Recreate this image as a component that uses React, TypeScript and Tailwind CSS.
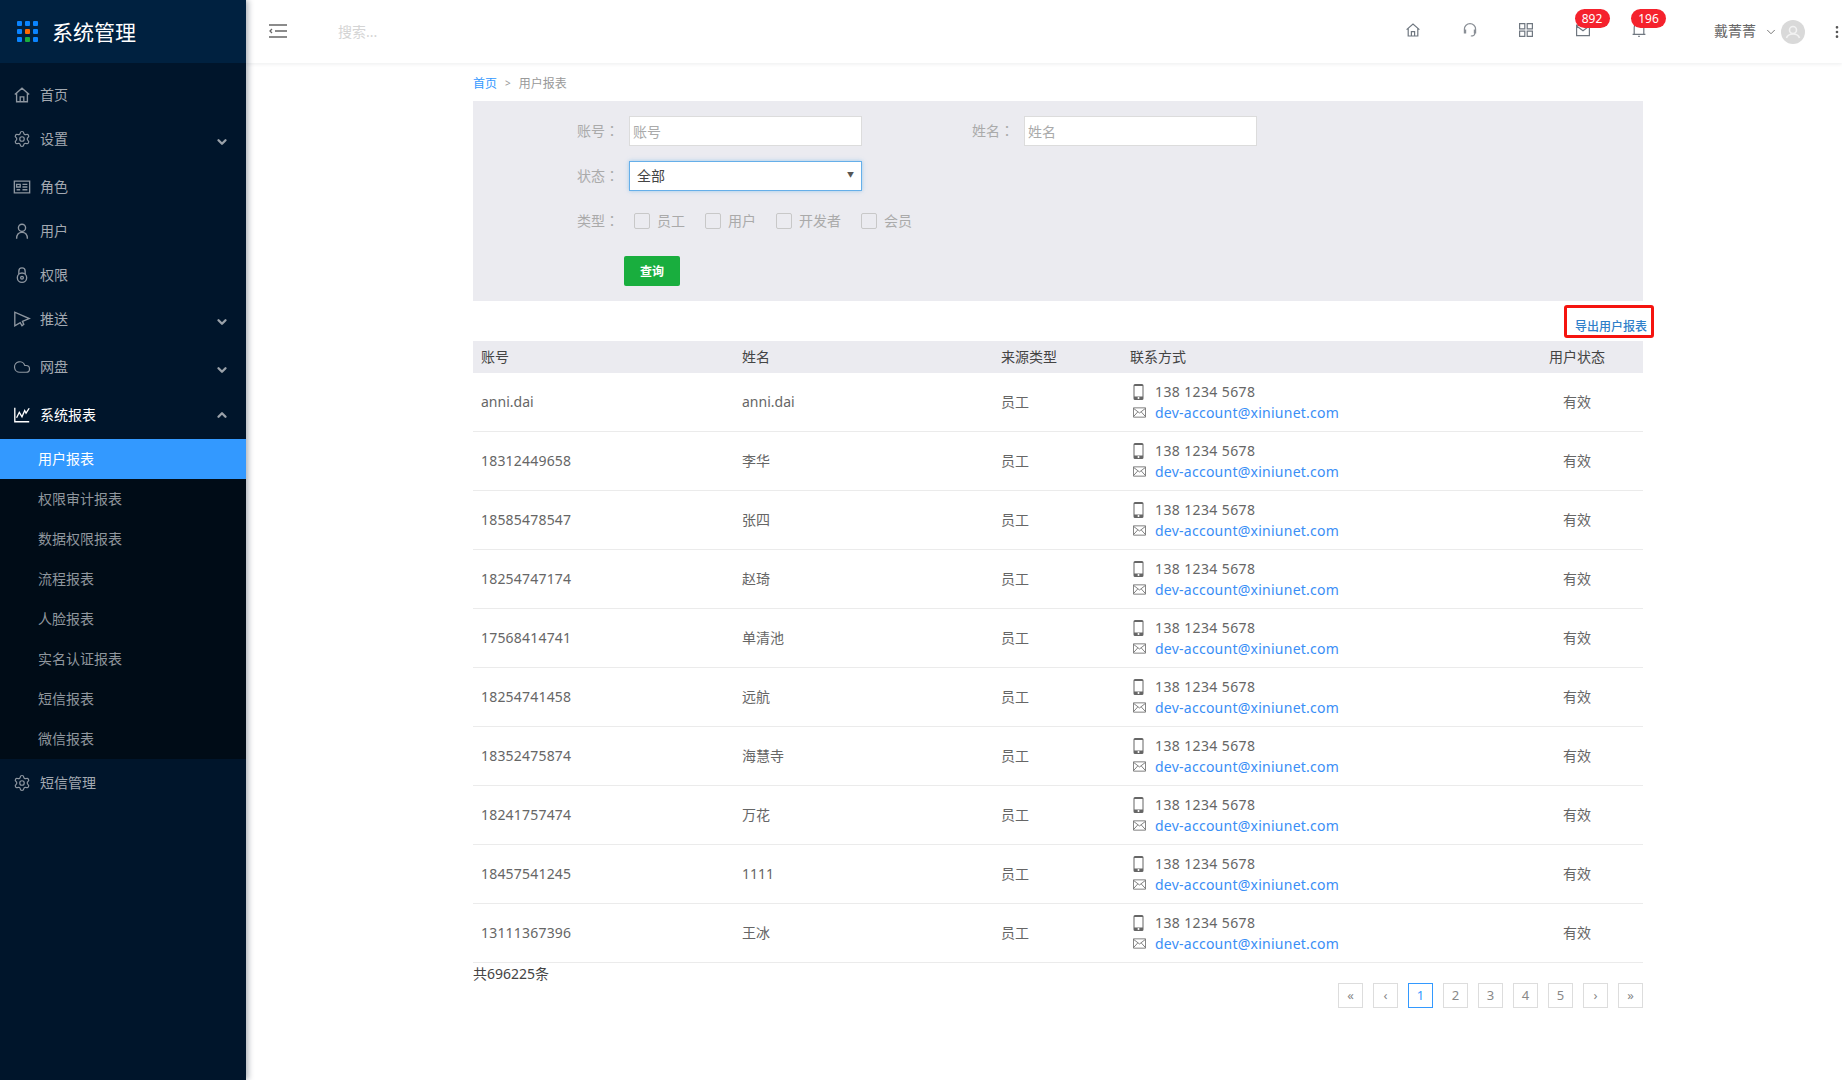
import { ChevronDown, ChevronUp, Settings, Cloud, MoreVertical } from "lucide-react";
import type { ReactNode } from "react";

const iconCls = "w-[18px] h-[18px] text-[#8d96a0]";

function Svg({ children, className = iconCls }: { children: ReactNode; className?: string }) {
  return (
    <svg viewBox="0 0 20 20" fill="none" stroke="currentColor" strokeWidth="1.5" className={className}>
      {children}
    </svg>
  );
}

const HomeIcon = ({ className }: { className?: string }) => (
  <Svg className={className}>
    <path d="M2 9.500 10 2.500l8 7M4 8v9.500h12V8M8 17.500v-5.500h4v5.500" />
  </Svg>
);
const RoleIcon = () => (
  <Svg>
    <path d="M1.500 3.500h17v13h-17zM4 7h4v3H4zM4 13h4M10.500 7h5.500M10.500 10h5.500M10.500 13h5.500" />
  </Svg>
);
const UserIcon = () => (
  <Svg>
    <circle cx="10" cy="6.500" r="4" />
    <path d="M4 18.500c0-4 2-7 6-7s6 3 6 7" />
  </Svg>
);
const LockIcon = () => (
  <Svg>
    <path d="M6.500 9V5.500a3.500 3.500 0 0 1 7 0V9" />
    <circle cx="10" cy="13" r="5.200" />
    <circle cx="10" cy="13" r="1.500" />
  </Svg>
);
const PushIcon = () => (
  <Svg>
    <path d="M2 2.500v15l6-3.500 2 3.500 2-1.500-1.500-3.500 7.500-3z" />
  </Svg>
);
const ChartIcon = () => (
  <svg viewBox="0 0 20 20" fill="none" stroke="white" strokeWidth="1.5" className="w-[18px] h-[18px]">
    <path d="M2 2v15.500h16M4 13l3-6 3 5 3-7 1.500 3L18 2.500" />
  </svg>
);

type MenuItem = { label: string; icon: ReactNode; h: string; arrow?: boolean };

const topMenu: MenuItem[] = [
  { label: "首页", icon: <HomeIcon className={iconCls} />, h: "h-[44px]" },
  { label: "设置", icon: <Settings className={iconCls} strokeWidth={1.6} />, h: "h-[48px]", arrow: true },
  { label: "角色", icon: <RoleIcon />, h: "h-[44px]" },
  { label: "用户", icon: <UserIcon />, h: "h-[44px]" },
  { label: "权限", icon: <LockIcon />, h: "h-[44px]" },
  { label: "推送", icon: <PushIcon />, h: "h-[48px]", arrow: true },
  { label: "网盘", icon: <Cloud className={iconCls} strokeWidth={1.6} />, h: "h-[48px]", arrow: true },
];

const subMenu = ["用户报表", "权限审计报表", "数据权限报表", "流程报表", "人脸报表", "实名认证报表", "短信报表", "微信报表"];

function Logo() {
  const colors = ["#0a84ff", "#0a84ff", "#0a84ff", "#0a84ff", "#ff6a00", "#0a84ff", "#0a84ff", "#1aad3e", "#0a84ff"];
  return (
    <div className="grid grid-cols-3 gap-[3px] w-[21px]">
      {colors.map((c, i) => (
        <svg key={i} viewBox="0 0 5 5" className="w-[5px] h-[5px]">
          <rect width="5" height="5" rx="1" fill={c} />
        </svg>
      ))}
    </div>
  );
}

function Sidebar() {
  return (
    <aside className="w-[246px] shrink-0 bg-[#00152b] shadow-[2px_0_6px_rgba(0,21,41,0.35)] z-20 relative">
      <div className="h-[63px] bg-[#002140] flex items-center pl-[17px] gap-[14px]">
        <Logo />
        <span className="text-[21px] leading-[28px] text-white">系统管理</span>
      </div>
      <nav className="pt-[10px]">
        {topMenu.map((m) => (
          <div key={m.label} className={`${m.h} flex items-start pt-[11px] pl-[13px] pr-[17px] text-[14px] leading-[22px] text-[#a3a9b1]`}>
            <span className="w-[27px] h-[22px] flex items-center">{m.icon}</span>
            <span>{m.label}</span>
            {m.arrow && <ChevronDown className="ml-auto mt-[7px] w-[14px] h-[14px] text-[#9aa1a9]" strokeWidth={4} />}
          </div>
        ))}
        <div className="h-[46px] flex items-start pt-[11px] pl-[13px] pr-[17px] text-[14px] leading-[22px] text-white">
          <span className="w-[27px] h-[22px] flex items-center"><ChartIcon /></span>
          <span>系统报表</span>
          <ChevronUp className="ml-auto mt-[4px] w-[14px] h-[14px] text-[#9aa1a9]" strokeWidth={4} />
        </div>
        <div className="bg-[#000c17]">
          {subMenu.map((s, i) => (
            <div key={s} className={`h-[40px] flex items-center pl-[38px] pb-[2px] text-[14px] ${i === 0 ? "bg-[#3399ff] text-white" : "text-[#8f969d]"}`}>
              {s}
            </div>
          ))}
        </div>
        <div className="h-[44px] mt-[2px] flex items-center pl-[13px] text-[14px] text-[#a3a9b1]">
          <span className="w-[27px] h-[22px] flex items-center"><Settings className={iconCls} strokeWidth={1.6} /></span>
          <span className="pb-[2px]">短信管理</span>
        </div>
      </nav>
    </aside>
  );
}

function Badge({ n }: { n: number }) {
  return (
    <span className="absolute left-[0px] top-[-13px] w-[35px] h-[19px] rounded-full bg-[#f5222d] text-white text-[12px] leading-[19px] text-center">
      {n}
    </span>
  );
}

function TopBar() {
  const topIcon = "w-[16px] h-[16px] text-[#6f7780]";
  return (
    <header className="h-[63px] shrink-0 bg-white shadow-[0_1px_4px_rgba(0,21,41,0.08)] flex items-center relative z-10">
      <svg viewBox="0 0 18 14" fill="none" stroke="#666" strokeWidth="1.3" className="ml-[23px] mb-[2px] w-[18px] h-[14px]">
        <path d="M0 1h18M6 7h12M0 13h18M3 5 1 7l2 2" />
      </svg>
      <span className="ml-[51px] text-[14px] text-[#d4d4d4]">搜索...</span>
      <div className="ml-auto flex items-center h-full">
        <div className="flex items-center gap-[40.500px] mt-[-3px]">
          <span className="w-[16px] h-[16px]"><HomeIcon className={topIcon} /></span>
          <Svg className="w-[16px] h-[16px] text-[#8a8f96]">
            <path d="M3 12V9a7 7 0 0 1 14 0v3M3 10h1.500v3.500H3zM15.500 10H17v3.500h-1.500zM16 14c0 2-2 3.500-5 3.500" />
          </Svg>
          <Svg className={topIcon}>
            <path d="M2 2h6.500v6.500H2zM11.500 2H18v6.500h-6.500zM2 11.500h6.500V18H2zM11.500 11.500H18V18h-6.500z" />
          </Svg>
          <span className="relative w-[16px] h-[16px]">
            <Svg className={topIcon}><path d="M2 4h16v13H2zM2 5l8 6 8-6" /></Svg>
            <Badge n={892} />
          </span>
          <span className="relative w-[16px] h-[16px]">
            <Svg className={topIcon}><path d="M4 15V7a6 6 0 0 1 12 0v8M2 15.500h16M9 18h2" /></Svg>
            <Badge n={196} />
          </span>
        </div>
        <span className="ml-[67px] pb-[2px] text-[14px] text-[#666]">戴菁菁</span>
        <ChevronDown className="ml-[8px] w-[14px] h-[14px] text-[#666]" strokeWidth={1.5} />
        <span className="ml-[3px] w-[24px] h-[24px] rounded-full bg-[#d9d9d9] flex items-center justify-center">
          <svg viewBox="0 0 20 20" className="w-[20px] h-[20px]" fill="none" stroke="#f2f2f2" strokeWidth="1.600">
            <circle cx="10" cy="8" r="3.500" />
            <path d="M3.500 16c1-3 3.500-4 6.500-4s5.500 1 6.500 4" />
          </svg>
        </span>
        <MoreVertical className="ml-[24px] mr-[-3px] w-[16px] h-[16px] text-[#555]" strokeWidth={2} />
      </div>
    </header>
  );
}

const labelCls = "w-[56px] pb-[2px] text-[14px] text-[#aaaaaa] leading-[30px] whitespace-nowrap";

function Label({ text, className = "" }: { text: string; className?: string }) {
  return (
    <span className={`${labelCls} ${className}`}>
      {text}
      <span className="font-['Noto_Sans_CJK_TC',sans-serif]">：</span>
    </span>
  );
}

function FilterPanel() {
  const boxes = [
    { t: "员工", w: "w-[71px]" },
    { t: "用户", w: "w-[71px]" },
    { t: "开发者", w: "w-[85px]" },
    { t: "会员", w: "w-[71px]" },
  ];
  return (
    <section className="h-[200px] bg-[#ebebf0] pt-[15px] pl-[104px]">
      <div className="flex items-center h-[30px]">
        <Label text="账号" />
        <input placeholder="账号" className="ml-[-4px] w-[233px] h-[30px] bg-white border border-[#dcdcdc] px-[3px] text-[14px] placeholder:text-[#aaaaaa]" />
        <Label text="姓名" className="ml-[110px]" />
        <input placeholder="姓名" className="ml-[-4px] w-[233px] h-[30px] bg-white border border-[#dcdcdc] px-[3px] text-[14px] placeholder:text-[#aaaaaa]" />
      </div>
      <div className="flex items-center h-[30px] mt-[15px]">
        <Label text="状态" />
        <div className="ml-[-4px] w-[233px] h-[30px] bg-white border border-[#66afe9] shadow-[0_0_4px_rgba(102,175,233,0.6)] flex items-center pl-[7px] pr-[7px] pb-[1px] text-[14px] text-[#444]">
          全部
          <span className="ml-auto text-[7px] text-[#555]">▼</span>
        </div>
      </div>
      <div className="flex items-center h-[30px] mt-[15px]">
        <Label text="类型" />
        {boxes.map((b, i) => (
          <span key={b.t} className={`${b.w} flex items-center ${i === 0 ? "ml-[1px]" : ""}`}>
            <span className="w-[16px] h-[16px] rounded-[2px] border border-[#c8c8c8]" />
            <span className="ml-[7px] pb-[2px] text-[14px] text-[#aaaaaa]">{b.t}</span>
          </span>
        ))}
      </div>
      <button type="button" className="block ml-[47px] mt-[20px] pt-[1px] w-[56px] h-[30px] rounded-[2px] bg-[#19ae3e] text-white text-[12px] font-bold">
        查询
      </button>
    </section>
  );
}

const rows = [
  ["anni.dai", "anni.dai"],
  ["18312449658", "李华"],
  ["18585478547", "张四"],
  ["18254747174", "赵琦"],
  ["17568414741", "单清池"],
  ["18254741458", "远航"],
  ["18352475874", "海慧寺"],
  ["18241757474", "万花"],
  ["18457541245", "1111"],
  ["13111367396", "王冰"],
];

const cols = "grid grid-cols-[262px_259px_129px_388px_132px]";

function UserTable() {
  return (
    <div>
      <div className={`${cols} h-[32px] items-center pb-[2px] bg-[#ebebf0] text-[14px] text-[#444]`}>
        <span className="pl-[8px]">账号</span>
        <span className="pl-[7px]">姓名</span>
        <span className="pl-[7px]">来源类型</span>
        <span className="pl-[7px]">联系方式</span>
        <span className="text-center">用户状态</span>
      </div>
      {rows.map(([account, name], i) => (
        <div key={i} className={`${cols} h-[59px] items-center border-b border-[#ebebeb] text-[14px] text-[#666]`}>
          <span className={`pl-[8px] pb-[2px] ${i === 0 ? "" : "tracking-[0.2px]"}`}>{account}</span>
          <span className="pl-[7px] pb-[2px]">{name}</span>
          <span className="pl-[7px] pb-[2px]">员工</span>
          <div className="pl-[10px]">
            <div className="flex items-center h-[21px]">
              <svg viewBox="0 0 10 16" className="w-[11px] h-[16px]" fill="#666">
                <path d="M1.500 0h7A1.500 1.500 0 0 1 10 1.500v13A1.500 1.500 0 0 1 8.500 16h-7A1.500 1.500 0 0 1 0 14.500v-13A1.500 1.500 0 0 1 1.500 0zM1 2v10.500h8V2zm4 11a1 1 0 1 0 0 2 1 1 0 0 0 0-2z" fillRule="evenodd" />
              </svg>
              <span className="ml-[11px] tracking-[0.38px]">138 1234 5678</span>
            </div>
            <div className="flex items-center h-[21px]">
              <svg viewBox="0 0 14 11" className="w-[13px] h-[11px]" fill="none" stroke="#777" strokeWidth="1">
                <path d="M.5.500h13v10H.500zM.5 1 7 6l6.500-5M.5 10 5 5M13.500 10 9 5" />
              </svg>
              <span className="ml-[9px] text-[#3a8ef6] tracking-[0.25px]">dev-account@xiniunet.com</span>
            </div>
          </div>
          <span className="text-center pb-[2px]">有效</span>
        </div>
      ))}
    </div>
  );
}

function Pager() {
  const items = ["«", "‹", "1", "2", "3", "4", "5", "›", "»"];
  return (
    <div className="flex justify-end gap-[10px] mt-[-2px]">
      {items.map((p) => (
        <span
          key={p}
          className={`w-[25px] h-[25px] border flex items-center justify-center text-[13px] ${
            p === "1" ? "border-[#3399ff] text-[#3399ff]" : "border-[#dddddd] text-[#888]"
          }`}
        >
          {p}
        </span>
      ))}
    </div>
  );
}

export default function App() {
  return (
    <div className="flex h-screen overflow-hidden bg-white font-['Noto_Sans','Noto_Sans_CJK_SC',sans-serif]">
      <Sidebar />
      <div className="flex-1 min-w-0 flex flex-col">
        <TopBar />
        <main className="ml-[227px] w-[1170px]">
          <div className="h-[38px] pt-[3px] flex items-center gap-[8px] text-[12px] text-[#999]">
            <span className="text-[#3399ff]">首页</span>
            <span className="text-[10px]">&gt;</span>
            <span>用户报表</span>
          </div>
          <FilterPanel />
          <div className="h-[40px] relative">
            <a className="absolute left-[1091px] top-[4px] w-[90px] h-[33px] border-[3px] border-[#f5140f] rounded-[3px] flex items-end justify-end pr-[4px] text-[12px] leading-[16px] font-medium text-[#2f7fc9] whitespace-nowrap">
              导出用户报表
            </a>
          </div>
          <UserTable />
          <div className="text-[14px] text-[#444] leading-[22px]">共696225条</div>
          <Pager />
        </main>
      </div>
    </div>
  );
}
